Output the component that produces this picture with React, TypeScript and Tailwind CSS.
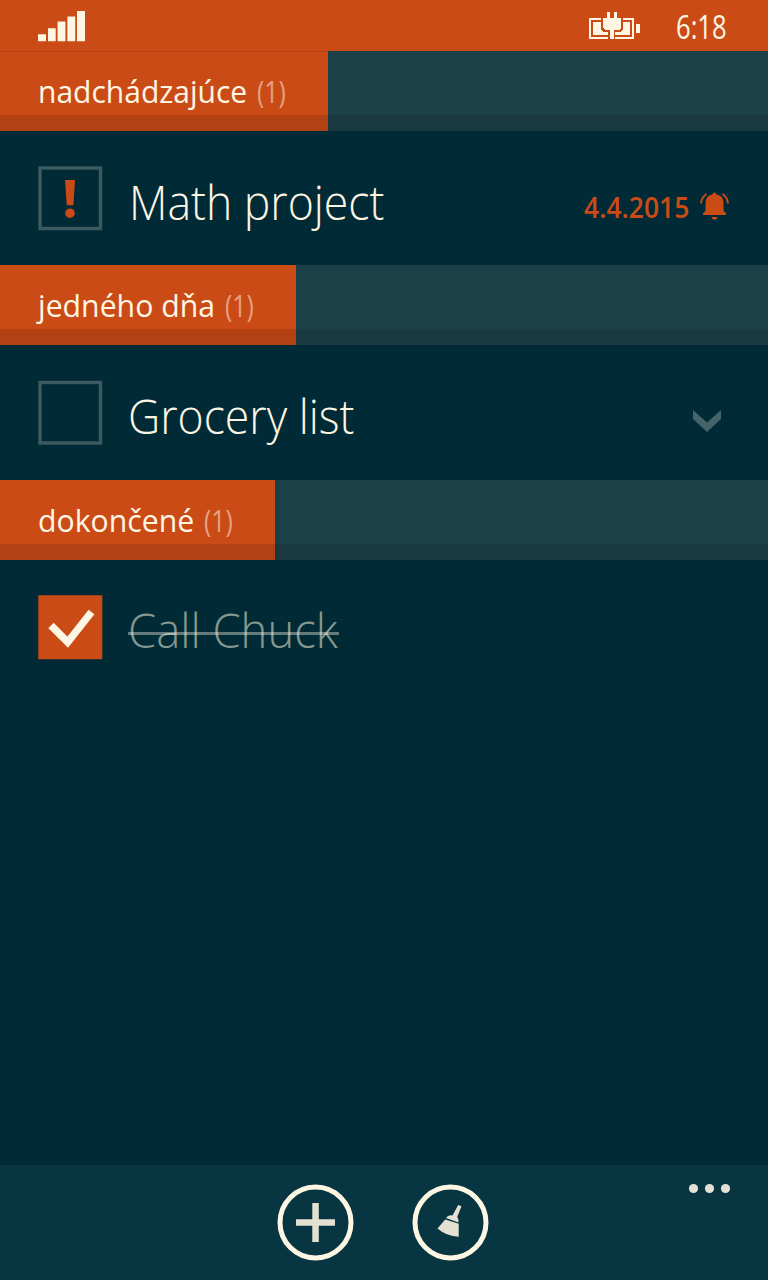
import React from "react";

function SectionHeader({ title, box, text, scale }: { title: string; box: string; text: string; scale: string }) {
  return (
    <div className="flex h-20 shrink-0 bg-[#1b4047]">
      <div className={`flex flex-col bg-[#cb4b16] ${box}`}>
        <div className="flex h-16 items-center whitespace-nowrap pl-[38px] pt-4 text-[31px] leading-[40px]">
          <div className={text}>
            <span className={`inline-block origin-left ${scale}`}>{title}</span>
          </div>
          <span className="-mt-px inline-block origin-left scale-x-[0.8] font-normal text-[#e5a183]">(1)</span>
        </div>
        <div className="h-4 bg-[#b24213]" />
      </div>
      <div className="flex flex-1 items-end">
        <div className="h-4 w-full bg-[#1b3940]" />
      </div>
    </div>
  );
}

export default function App() {
  return (
    <div className="flex h-[1280px] w-[768px] flex-col overflow-hidden bg-[#002b36] font-['Open_Sans','Noto_Sans',sans-serif] text-[#fdf6e3]">
      <div className="flex h-[51px] shrink-0 items-start bg-[#cb4b16]">
        <svg className="ml-[38px] mt-[11px] h-[31px] w-12" viewBox="0 0 48 31" fill="#fdf6e3">
          <path d="M0 23.3h8V30.3H0zM10 17.3h7.7v13H10zM19.6 10.5h7.8v19.8h-7.8zM29.4 5.5h7.8v24.8h-7.8zM39 0h8v30.3h-8z" />
        </svg>
        <svg className="ml-[503px] mt-3 h-[27px] w-[51px]" viewBox="0 0 51 27" fill="#fdf6e3" shapeRendering="crispEdges">
          <path d="M0 6h12v2H2v17h17v2H0zM34 6h11v21H26v-2h17V8h-9zM47 12h4v9h-4z" />
          <path d="M4 10h8v8l2 2h5v3H4zM34 10h7v13H26v-3h5l3-2z" />
          <path d="M14 6h4V0h3v6h4V0h3v6h4v10l-2 2h-5v9h-4v-9h-5l-2-2z" />
        </svg>
        <div className="ml-[36px] mt-[7px] origin-left scale-x-[0.8] whitespace-nowrap text-[32px] font-normal leading-[40px]">6:18</div>
      </div>

      <SectionHeader title="nadchádzajúce" box="w-[328px] border-t border-[#b84415]" text="-mt-px w-[219px]" scale="scale-x-[0.968]" />
      <div className="flex h-[134px] shrink-0 pl-[38px]">
        <svg className="mt-[35px] size-[65px]" viewBox="0 0 65 65" fill="#cb4b16">
          <rect x="2" y="2" width="60.5" height="60.5" fill="none" stroke="#3b5b60" strokeWidth="3.4" />
          <path d="M27 14h10l-1.6 25.2h-6.6z" />
          <circle cx="32" cy="47.2" r="4.8" />
        </svg>
        <div className="ml-[26px] mt-[41px] w-[455px] origin-left scale-x-[0.928] whitespace-nowrap text-[48px] font-light leading-[60px]">Math project</div>
        <div className="-ml-4 mt-[57px] w-[131px] pl-4">
          <div className="origin-left scale-x-[0.945] whitespace-nowrap text-[28px] font-semibold leading-[38px] text-[#cb4b16]">4.4.2015</div>
        </div>
        <svg className="mt-[61px] h-7 w-[30px]" viewBox="0 0 30 28" fill="#cb4b16">
          <path d="M13.5 2.5q0-2 2-2t2 2q7 1 7 9v6.5q0 2 2.5 3v2h-23v-2q2.5-1 2.500-3v-6.500q0-8 7-9zM12.500 25h6q-.5 2.800-3 2.800t-3-2.800z" />
          <path d="M7.500 2Q2.500 5.500 2 11.500M23.500 2Q28.500 5.500 29 11.500" fill="none" stroke="#cb4b16" strokeWidth="2" />
        </svg>
      </div>

      <SectionHeader title="jedného dňa" box="w-[296px]" text="-mt-px w-[187px]" scale="scale-x-[0.975]" />
      <div className="flex h-[135px] shrink-0 pl-[38px]">
        <svg className="mt-[35px] size-[65px]" viewBox="0 0 65 65">
          <rect x="2" y="2.500" width="60.500" height="60.500" fill="none" stroke="#3b5b60" strokeWidth="3.400" />
        </svg>
        <div className="ml-[25px] mt-[41px] w-[564px] origin-left scale-x-[0.928] whitespace-nowrap text-[48px] font-light leading-[60px]">Grocery list</div>
        <svg className="mt-[65px] h-[23px] w-[30px]" viewBox="0 0 30 23" fill="#456469">
          <path d="M1 0l14 12.500L29 0v9L15 22 1 9z" />
        </svg>
      </div>

      <SectionHeader title="dokončené" box="w-[275px]" text="-mt-px w-[166px]" scale="scale-x-[0.975]" />
      <div className="flex flex-1 pl-[38px]">
        <svg className="mt-[35px] size-[65px]" viewBox="0 0 65 65">
          <path d="M.3.3h64v64H.3z" fill="#cb4b16" />
          <path d="M13 30.500l16.700 16.700L53.500 17" fill="none" stroke="#fdf6e3" strokeWidth="7.500" />
        </svg>
        <div className="relative ml-[25px] mt-[40px] h-[60px] w-[212px]">
          <div className="origin-left scale-x-[0.945] whitespace-nowrap text-[48px] font-light leading-[60px] text-[#85978f]">Call Chuck</div>
          <div className="absolute left-0 top-[32px] h-[3px] w-[211px] bg-[#fdf6e3]/40" />
        </div>
      </div>

      <div className="flex h-[115px] shrink-0 bg-[#073642] pl-[277px]">
        <svg className="mt-[19px] size-[77px]" viewBox="0 0 77 77" fill="none">
          <circle cx="38.500" cy="38.500" r="35.500" stroke="#fdf6e3" strokeWidth="5" />
          <path d="M35.300 19h6.500v16.200H58v6.500H41.800V58h-6.500V41.700H19v-6.500h16.300z" fill="#e4e1d2" />
        </svg>
        <svg className="ml-[58px] mt-[19px] size-[77px]" viewBox="0 0 77 77">
          <circle cx="38.500" cy="38.500" r="35.500" fill="none" stroke="#fdf6e3" strokeWidth="5" />
          <path d="M46.200 21l3.300 1.200-4.300 10.800q2 2 1.300 5.500L34 34q2-3.500 6.500-2.500zM33.200 35.500l13.500 4.300v13Q34 52 25.500 44.500z" fill="#e4e1d2" />
        </svg>
        <svg className="ml-[199px] mt-[18px] h-3 w-[44px]" viewBox="0 0 44 12" fill="#e4e1d2">
          <circle cx="5.500" cy="5.500" r="4.600" />
          <circle cx="21.500" cy="5.500" r="4.600" />
          <circle cx="37.500" cy="5.500" r="4.600" />
        </svg>
      </div>
    </div>
  );
}
